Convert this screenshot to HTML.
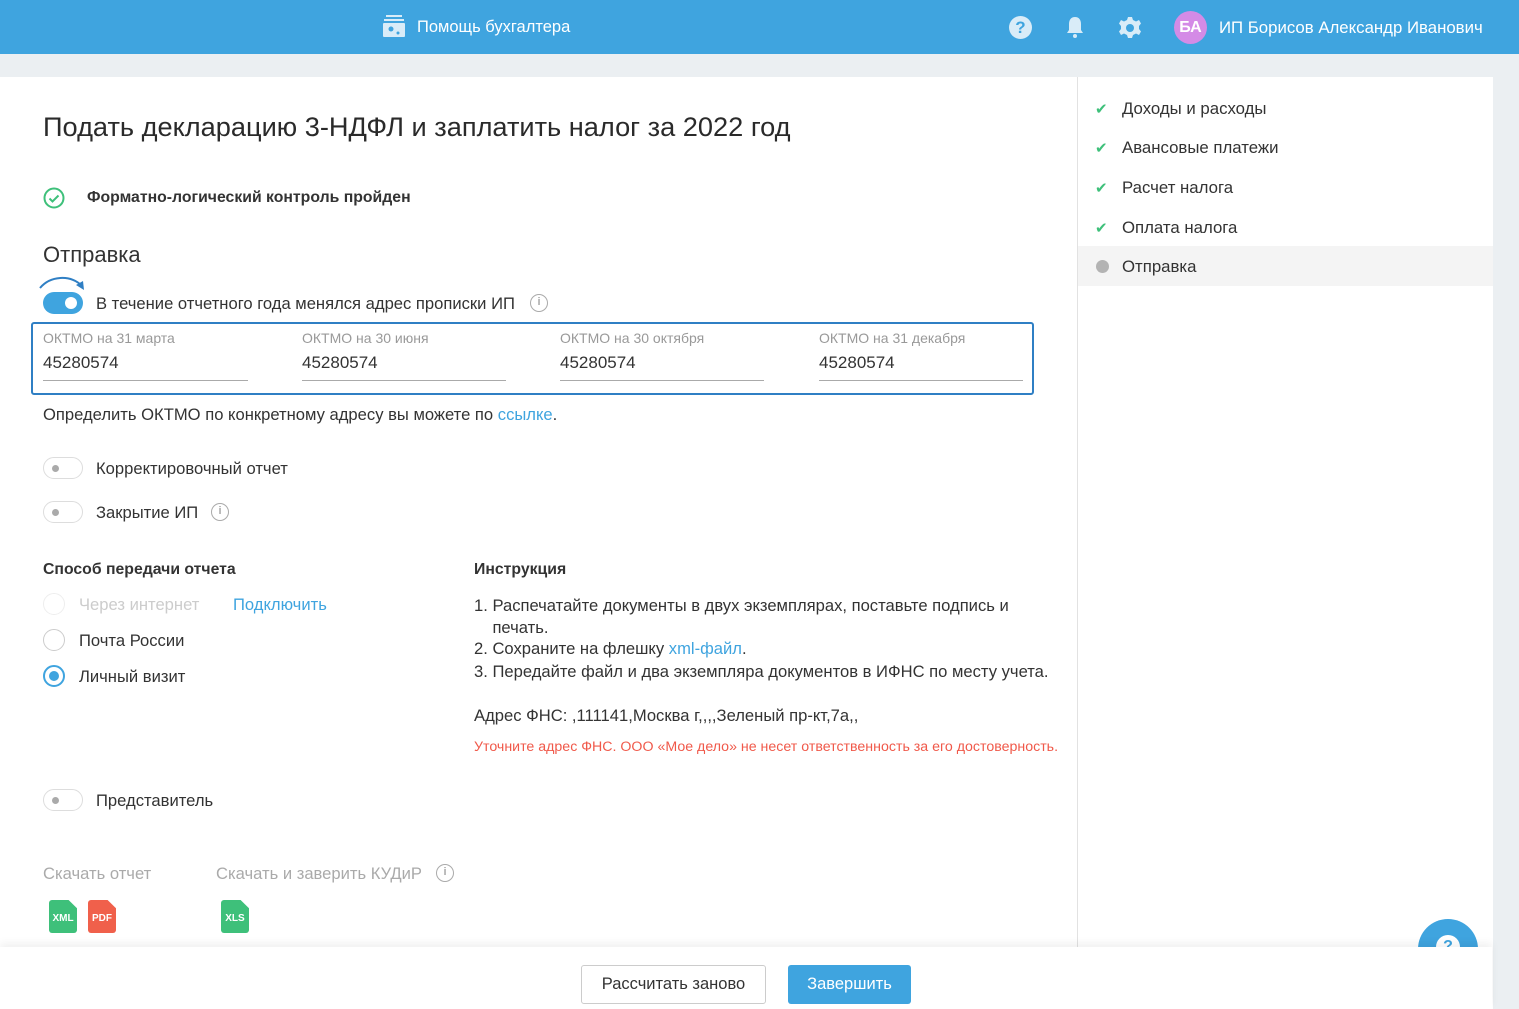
<!DOCTYPE html>
<html><head><meta charset="utf-8"><style>
*{margin:0;padding:0;box-sizing:border-box}
body{width:1519px;height:1009px;overflow:hidden;background:#ebeff2;font-family:"Liberation Sans",sans-serif;color:#333;position:relative}
.a{position:absolute;white-space:nowrap}
.hdr{position:absolute;left:0;top:0;width:1519px;height:54px;background:#3fa4df;color:#fff}
.main{position:absolute;left:0;top:77px;width:1077px;height:932px;background:#fff}
.side{position:absolute;left:1077px;top:77px;width:416px;height:932px;background:#fff;border-left:1px solid #e2e2e2}
.t15{font-size:16.6px}
.tg{position:absolute;width:40px;height:22px;border:1px solid #ddd;border-radius:11px;background:#fff}
.tg:after{content:"";position:absolute;left:8px;top:7px;width:7px;height:7px;border-radius:50%;background:#aaa}
.lbl{font-size:14px;color:#999}
.val{font-size:17px;color:#333}
.ln{position:absolute;height:1px;background:#aaa}
.rad{position:absolute;width:22px;height:22px;border:1.5px solid #ccc;border-radius:50%;background:#fff}
.blue{color:#3fa4df}
.file{position:absolute;width:28px;height:33px;border-radius:3px;color:#fff;font-size:10px;font-weight:bold;text-align:center;line-height:37px;clip-path:polygon(0 0,70% 0,100% 25%,100% 100%,0 100%)}
.check{color:#3ec07a;font-size:15px}
.step{position:absolute;left:1122px;font-size:16.8px}
.inf{position:absolute;width:18px;height:18px;border:1.5px solid #aaa;border-radius:50%;color:#aaa;font-size:11px;text-align:center;line-height:15px;font-weight:bold}
</style></head><body>
<div class="hdr">
  <svg class="a" style="left:383px;top:15px" width="22" height="22" viewBox="0 0 22 22"><rect x="3" y="0" width="16" height="2" fill="#d9ecf8"/><rect x="1" y="4" width="20" height="2" fill="#d9ecf8"/><rect x="0" y="8" width="22" height="14" rx="1" fill="#d9ecf8"/><circle cx="8" cy="14" r="2.5" fill="#3fa4df"/><circle cx="15" cy="18" r="1.5" fill="#3fa4df"/></svg>
  <div class="a" style="left:417px;top:18px;font-size:16.5px">Помощь бухгалтера</div>
  <div class="a" style="left:1009px;top:16px;width:23px;height:23px;border-radius:50%;background:#d9ecf8;color:#3fa4df;font-weight:bold;font-size:17px;text-align:center;line-height:23px">?</div>
  <svg class="a" style="left:1065px;top:15px" width="20" height="25" viewBox="0 0 20 25"><path d="M10 2c-4 0-6 3-6 7v6l-2 3h16l-2-3V9c0-4-2-7-6-7z" fill="#d9ecf8"/><circle cx="10" cy="21" r="2" fill="#d9ecf8"/></svg>
  <svg class="a" style="left:1118px;top:16px" width="24" height="24" viewBox="0 0 24 24"><path d="M10 1h4l1 3 3 1.5 3-1.5 2 3.5-2 2.5v3l2 2.5-2 3.5-3-1.5-3 1.5-1 3h-4l-1-3-3-1.5-3 1.5-2-3.5 2-2.5v-3l-2-2.5 2-3.5 3 1.5 3-1.5z" fill="#d9ecf8"/><circle cx="12" cy="12" r="4" fill="#3fa4df"/></svg>
  <div class="a" style="left:1174px;top:11px;width:33px;height:33px;border-radius:50%;background:#d48be6;color:#fff;font-weight:bold;font-size:16px;text-align:center;line-height:33px">БА</div>
  <div class="a" style="left:1219px;top:18px;font-size:16.8px">ИП Борисов Александр Иванович</div>
</div>
<div class="main"></div>
<div class="side"></div>
<div class="a" style="left:1078px;top:246px;width:415px;height:40px;background:#f4f4f4"></div>
<div class="a check" style="left:1095px;top:100px">✔</div><div class="step" style="top:99px">Доходы и расходы</div>
<div class="a check" style="left:1095px;top:139px">✔</div><div class="step" style="top:138px">Авансовые платежи</div>
<div class="a check" style="left:1095px;top:179px">✔</div><div class="step" style="top:178px">Расчет налога</div>
<div class="a check" style="left:1095px;top:219px">✔</div><div class="step" style="top:218px">Оплата налога</div>
<div class="a" style="left:1096px;top:260px;width:13px;height:13px;border-radius:50%;background:#b3b3b3"></div><div class="step" style="top:257px">Отправка</div>

<div class="a" style="left:43px;top:111px;font-size:27.2px;color:#2a2a2a">Подать декларацию 3-НДФЛ и заплатить налог за 2022 год</div>
<svg class="a" style="left:43px;top:187px" width="22" height="22" viewBox="0 0 22 22"><circle cx="11" cy="11" r="9.5" fill="none" stroke="#3ec07a" stroke-width="2"/><path d="M6.5 11.5l3 3 6-6" fill="none" stroke="#3ec07a" stroke-width="2"/></svg>
<div class="a" style="left:87px;top:189px;font-size:15.8px;font-weight:bold">Форматно-логический контроль пройден</div>
<div class="a" style="left:43px;top:242px;font-size:22px">Отправка</div>

<svg class="a" style="left:38px;top:274px" width="50" height="18" viewBox="0 0 50 18"><path d="M2 14C12 2 32 0 44 12" fill="none" stroke="#2f7fc4" stroke-width="2"/><path d="M46 16l-1-9-7 4z" fill="#2f7fc4"/></svg>
<div class="a" style="left:43px;top:292px;width:40px;height:22px;border-radius:11px;background:#3fa4df"><div style="position:absolute;right:6px;top:5px;width:12px;height:12px;border-radius:50%;background:#fff"></div></div>
<div class="a t15" style="left:96px;top:294px">В течение отчетного года менялся адрес прописки ИП</div>
<div class="inf" style="left:530px;top:294px">i</div>

<div class="a" style="left:31px;top:322px;width:1003px;height:73px;border:2px solid #2f7fc4;border-radius:3px"></div>
<div class="a lbl" style="left:43px;top:330px">ОКТМО на 31 марта</div><div class="a val" style="left:43px;top:353px">45280574</div><div class="ln" style="left:43px;top:380px;width:205px"></div>
<div class="a lbl" style="left:302px;top:330px">ОКТМО на 30 июня</div><div class="a val" style="left:302px;top:353px">45280574</div><div class="ln" style="left:302px;top:380px;width:204px"></div>
<div class="a lbl" style="left:560px;top:330px">ОКТМО на 30 октября</div><div class="a val" style="left:560px;top:353px">45280574</div><div class="ln" style="left:560px;top:380px;width:204px"></div>
<div class="a lbl" style="left:819px;top:330px">ОКТМО на 31 декабря</div><div class="a val" style="left:819px;top:353px">45280574</div><div class="ln" style="left:819px;top:380px;width:204px"></div>

<div class="a t15" style="left:43px;top:405px">Определить ОКТМО по конкретному адресу вы можете по <span class="blue">ссылке</span>.</div>

<div class="tg" style="left:43px;top:457px"></div><div class="a t15" style="left:96px;top:459px">Корректировочный отчет</div>
<div class="tg" style="left:43px;top:501px"></div><div class="a t15" style="left:96px;top:503px">Закрытие ИП</div>
<div class="inf" style="left:211px;top:503px">i</div>

<div class="a" style="left:43px;top:561px;font-size:15.8px;font-weight:bold">Способ передачи отчета</div>
<div class="rad" style="left:43px;top:593px;border-color:#eee"></div><div class="a t15" style="left:79px;top:595px;color:#ccc">Через интернет</div><div class="a t15 blue" style="left:233px;top:595px">Подключить</div>
<div class="rad" style="left:43px;top:629px"></div><div class="a t15" style="left:79px;top:631px">Почта России</div>
<div class="rad" style="left:43px;top:665px;border:2px solid #3fa4df"><div style="position:absolute;left:4px;top:4px;width:10px;height:10px;border-radius:50%;background:#3fa4df"></div></div><div class="a t15" style="left:79px;top:667px">Личный визит</div>

<div class="a" style="left:474px;top:561px;font-size:15.8px;font-weight:bold">Инструкция</div>
<div class="a t15" style="left:474px;top:595px;line-height:22px">1. Распечатайте документы в двух экземплярах, поставьте подпись и<br>&nbsp;&nbsp;&nbsp;&nbsp;печать.</div>
<div class="a t15" style="left:474px;top:639px">2. Сохраните на флешку <span class="blue">xml-файл</span>.</div>
<div class="a t15" style="left:474px;top:662px">3. Передайте файл и два экземпляра документов в ИФНС по месту учета.</div>
<div class="a t15" style="left:474px;top:706px">Адрес ФНС: ,111141,Москва г,,,,Зеленый пр-кт,7а,,</div>
<div class="a" style="left:474px;top:739px;font-size:14.2px;color:#f0594a">Уточните адрес ФНС. ООО «Мое дело» не несет ответственность за его достоверность.</div>

<div class="tg" style="left:43px;top:789px"></div><div class="a t15" style="left:96px;top:791px">Представитель</div>

<div class="a t15" style="left:43px;top:864px;color:#aaa">Скачать отчет</div>
<div class="a t15" style="left:216px;top:864px;color:#aaa">Скачать и заверить КУДиР</div>
<div class="inf" style="left:436px;top:864px">i</div>
<div class="file" style="left:49px;top:900px;background:#3ec07a">XML</div>
<div class="file" style="left:88px;top:900px;background:#f0604b">PDF</div>
<div class="file" style="left:221px;top:900px;background:#3ec07a">XLS</div>

<div class="a" style="left:1418px;top:919px;width:60px;height:60px;border-radius:50%;background:#3fa4df"><div style="position:absolute;left:18px;top:16px;width:24px;height:24px;border-radius:50%;background:#fff;color:#3fa4df;text-align:center;font-weight:bold;line-height:24px">?</div></div>
<div class="a" style="left:0;top:947px;width:1492px;height:62px;background:#fff;box-shadow:0 -4px 8px rgba(0,0,0,0.06)"></div>
<div class="a" style="left:581px;top:965px;width:185px;height:39px;border:1px solid #ccc;border-radius:3px;background:#fff;font-size:16.5px;text-align:center;line-height:37px">Рассчитать заново</div>
<div class="a" style="left:788px;top:965px;width:123px;height:39px;border-radius:3px;background:#3fa4df;color:#fff;font-size:16.5px;text-align:center;line-height:39px">Завершить</div>
</body></html>
